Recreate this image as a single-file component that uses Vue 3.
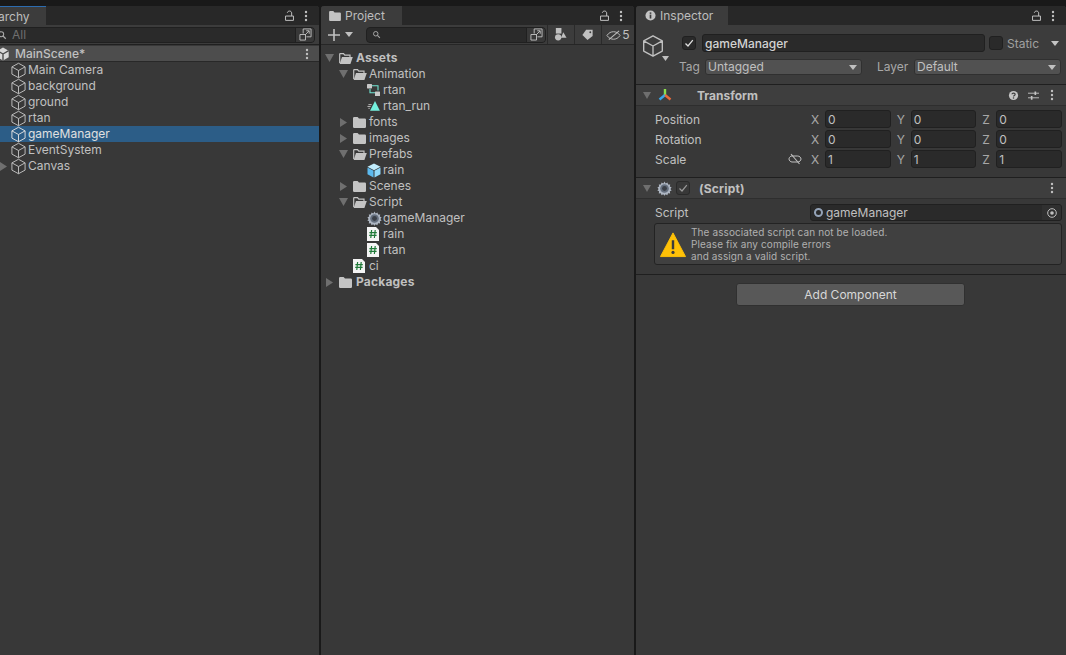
<script setup>
const hierarchy = [
  { name: "Main Camera" },
  { name: "background" },
  { name: "ground" },
  { name: "rtan" },
  { name: "gameManager", selected: true },
  { name: "EventSystem" },
  { name: "Canvas", arrow: "right" },
];

const project = [
  { name: "Assets", level: 0, arrow: "down", icon: "folder-open", bold: true },
  { name: "Animation", level: 1, arrow: "down", icon: "folder-open" },
  { name: "rtan", level: 2, icon: "controller" },
  { name: "rtan_run", level: 2, icon: "clip" },
  { name: "fonts", level: 1, arrow: "right", icon: "folder" },
  { name: "images", level: 1, arrow: "right", icon: "folder" },
  { name: "Prefabs", level: 1, arrow: "down", icon: "folder-open" },
  { name: "rain", level: 2, icon: "prefab" },
  { name: "Scenes", level: 1, arrow: "right", icon: "folder" },
  { name: "Script", level: 1, arrow: "down", icon: "folder-open" },
  { name: "gameManager", level: 2, icon: "gear" },
  { name: "rain", level: 2, icon: "script" },
  { name: "rtan", level: 2, icon: "script" },
  { name: "ci", level: 1, icon: "script" },
  { name: "Packages", level: 0, arrow: "right", icon: "folder", bold: true },
];

const transform = [
  { label: "Position", values: [0, 0, 0] },
  { label: "Rotation", values: [0, 0, 0] },
  { label: "Scale", values: [1, 1, 1], link: true },
];
const axes = ["X", "Y", "Z"];
</script>

<template>
  <svg class="defs" width="0" height="0">
    <symbol id="cube" viewBox="0 0 16 16">
      <path d="M8 1.200 14.200 4.600V11.400L8 14.800 1.800 11.400V4.600ZM1.800 4.600 8 8 14.200 4.600M8 8V14.800" fill="none" stroke="currentColor" stroke-width=".9" stroke-linejoin="round" />
    </symbol>
    <symbol id="lock" viewBox="0 0 10 12">
      <path d="M.6 6.600H9.400V11.400H.6ZM7.400 6.600V3.200C7.400.4 2.800.4 2.600 3" fill="none" stroke="currentColor" stroke-width="1.100" />
    </symbol>
    <symbol id="dots" viewBox="0 0 4 12">
      <circle cx="2" cy="2" r="1.200" fill="currentColor" />
      <circle cx="2" cy="6" r="1.200" fill="currentColor" />
      <circle cx="2" cy="10" r="1.200" fill="currentColor" />
    </symbol>
    <symbol id="expand" viewBox="0 0 14 14">
      <path d="M4.500 6V1H13V9.500H8M1 7H7V13H1ZM6.500 7.500 10.800 3.200M7.800 3H11V6.200" fill="none" stroke="currentColor" stroke-width="1" />
    </symbol>
    <symbol id="folder" viewBox="0 0 13 11">
      <path d="M0 1.200Q0 0 1.200 0H4.600L6 1.600H11.800Q13 1.600 13 2.800V9.800Q13 11 11.800 11H1.200Q0 11 0 9.800Z" fill="currentColor" />
    </symbol>
    <symbol id="folder-open" viewBox="0 0 14 11">
      <path d="M.7 10V1.200Q.7.600 1.300.600H4.500L5.800 2.200H11V4" fill="none" stroke="currentColor" stroke-width="1.200" />
      <path d="M3 4H13.800L11.400 11H.6Z" fill="currentColor" />
    </symbol>
    <symbol id="controller" viewBox="0 0 13 13">
      <path d="M3 5V8.800H9M4.600 1.800H11V6.600" fill="none" stroke="#6fe3d2" stroke-width="1.100" />
      <rect x="0" y="0" width="5" height="4.400" rx=".6" fill="#c9c9c9" />
      <rect x="8" y="7.400" width="5" height="4.600" rx=".6" fill="#c9c9c9" />
    </symbol>
    <symbol id="clip" viewBox="0 0 14 12">
      <path d="M8.600 .5 13.900 11H3.300Z" fill="#74f0de" />
      <path d="M1.500 4.500H5M.5 6.500H4M1.500 8.500H3" fill="none" stroke="#cfcfcf" stroke-width=".9" />
    </symbol>
    <symbol id="prefab" viewBox="0 0 14 15">
      <path d="M7 .5 13.500 3.800 7 7.200 .5 3.800Z" fill="#c0ecfc" />
      <path d="M.5 4.600 6.500 7.800V14.500L.5 11.200Z" fill="#5bb9ee" />
      <path d="M13.500 4.600 7.500 7.800V14.500L13.500 11.200Z" fill="#8fd8fa" />
    </symbol>
    <symbol id="gear" viewBox="0 0 16 16">
      <path d="M8 .6 9.200 2.600 11.200 1.600 11.800 3.800 14.100 3.600 13.700 5.800 15.600 6.800 14.300 8.500 15.600 10 13.700 11 14 13.200 11.800 13.100 11 15.200 9.200 14.200 8 15.800 6.600 14.200 4.800 15.200 4.100 13.100 1.900 13.200 2.200 11 .4 10 1.700 8.500 .4 6.800 2.300 5.800 1.900 3.600 4.200 3.800 4.800 1.600 6.800 2.600Z" fill="#aeb6c2" />
      <circle cx="8" cy="8" r="4.600" fill="#66707f" />
      <circle cx="8" cy="8" r="2.600" fill="#3a3f47" />
    </symbol>
    <symbol id="script" viewBox="0 0 12 14">
      <path d="M0 0H9L12 3V14H0Z" fill="#f4f4f4" />
      <path d="M4.600 3 3.800 11M8.200 3 7.400 11M2.400 5.600H9.800M2.200 8.400H9.600" fill="none" stroke="#1f7a38" stroke-width="1.200" />
    </symbol>
    <symbol id="tri-down" viewBox="0 0 8 7" preserveAspectRatio="none">
      <path d="M0 0H8L4 7Z" fill="currentColor" />
    </symbol>
    <symbol id="tri-right" viewBox="0 0 7 8" preserveAspectRatio="none">
      <path d="M0 0V8L7 4Z" fill="currentColor" />
    </symbol>
  </svg>

  <div class="editor">
    <!-- hierarchy -->
    <section class="panel hierarchy">
      <div class="tabbar">
        <div class="tab tab-hier active"><span class="nudge">archy</span></div>
        <button class="tab-btn"><svg class="i-lock"><use href="#lock" /></svg></button>
        <button class="tab-btn last"><svg class="i-dots"><use href="#dots" /></svg></button>
      </div>
      <div class="toolbar hier-tools">
        <div class="search">
          <svg class="i-search" viewBox="0 0 12 12"><circle cx="5" cy="5" r="3" fill="none" stroke="currentColor" stroke-width="1.300" /><path d="M7.200 7.200 10.500 10.500" stroke="currentColor" stroke-width="1.400" /></svg>
          <span class="placeholder">All</span>
          <span class="search-end"><svg class="i-expand"><use href="#expand" /></svg></span>
        </div>
      </div>
      <div class="scene-head">
        <svg class="i-unity" viewBox="0 0 16 16">
          <path d="M8 .5 14.500 4.200V11.800L8 15.500 1.500 11.800V4.200Z" fill="#d8d8d8" />
          <path d="M8 8V15.500M8 8 1.500 4.200M8 8 14.500 4.200" stroke="#4c4c4c" stroke-width="1.600" />
        </svg>
        <span>MainScene*</span>
        <svg class="i-dots scene-dots"><use href="#dots" /></svg>
      </div>
      <div v-for="row in hierarchy" :key="row.name" :class="['hier-row', { selected: row.selected }]">
        <span class="arrow-slot">
          <svg v-if="row.arrow" class="i-right"><use href="#tri-right" /></svg>
        </span>
        <svg class="i-cube"><use href="#cube" /></svg>
        <span>{{ row.name }}</span>
      </div>
    </section>

    <!-- project -->
    <section class="panel project">
      <div class="tabbar">
        <div class="tab tab-project active">
          <svg class="i-tab-folder"><use href="#folder" /></svg>
          <span class="nudge">Project</span>
        </div>
        <button class="tab-btn"><svg class="i-lock"><use href="#lock" /></svg></button>
        <button class="tab-btn last"><svg class="i-dots"><use href="#dots" /></svg></button>
      </div>
      <div class="toolbar project-tools">
        <div class="create">
          <svg class="i-plus" viewBox="0 0 12 12"><path d="M6 0V12M0 6H12" stroke="currentColor" stroke-width="1.600" /></svg>
          <svg class="i-small-down"><use href="#tri-down" /></svg>
        </div>
        <div class="search project-search">
          <svg class="i-search" viewBox="0 0 12 12"><circle cx="5" cy="5" r="3" fill="none" stroke="currentColor" stroke-width="1.300" /><path d="M7.200 7.200 10.500 10.500" stroke="currentColor" stroke-width="1.400" /></svg>
          <span class="search-end"><svg class="i-expand"><use href="#expand" /></svg></span>
        </div>
        <button class="tool-btn">
          <svg class="i-filter" viewBox="0 0 14 14">
            <rect x="2" y="0" width="6" height="6" fill="currentColor" />
            <circle cx="4.500" cy="10" r="3.400" fill="currentColor" />
            <path d="M10 4.500 13.500 10.500H7.500Z" fill="currentColor" />
          </svg>
        </button>
        <button class="tool-btn">
          <svg class="i-filter" viewBox="0 0 14 14">
            <path d="M5.500 2H12.500V8.500L7 13 1.500 7.500Z" fill="currentColor" />
            <circle cx="10" cy="4.600" r="1" fill="#3c3c3c" />
          </svg>
        </button>
        <button class="tool-btn wide">
          <svg class="i-eye" viewBox="0 0 16 12">
            <path d="M1 6.500C3 3.500 5.500 2.500 8 2.500S13 3.500 15 6.500C13 9.500 10.500 10.500 8 10.500S3 9.500 1 6.500Z" fill="none" stroke="currentColor" stroke-width="1" />
            <path d="M3 11 14 1.500" stroke="currentColor" stroke-width="1.100" />
          </svg>
          <span>5</span>
        </button>
      </div>
      <div class="tree">
        <div v-for="(row, i) in project" :key="i" class="tree-row" :style="{ paddingLeft: 3 + row.level * 14 + 'px' }">
          <span class="arrow-slot">
            <svg v-if="row.arrow === 'down'" class="i-down"><use href="#tri-down" /></svg>
            <svg v-else-if="row.arrow === 'right'" class="i-right"><use href="#tri-right" /></svg>
          </span>
          <span class="tree-icon">
            <svg :class="'icon-' + row.icon"><use :href="'#' + row.icon" /></svg>
          </span>
          <span :class="{ bold: row.bold }">{{ row.name }}</span>
        </div>
      </div>
    </section>

    <!-- inspector -->
    <section class="panel inspector">
      <div class="tabbar">
        <div class="tab tab-insp active">
          <svg class="i-info" viewBox="0 0 12 12">
            <circle cx="6" cy="6" r="5.500" fill="#c4c4c4" />
            <rect x="5.100" y="5" width="1.800" height="4.300" fill="#3c3c3c" />
            <rect x="5.100" y="2.600" width="1.800" height="1.600" fill="#3c3c3c" />
          </svg>
          <span class="nudge">Inspector</span>
        </div>
        <button class="tab-btn"><svg class="i-lock"><use href="#lock" /></svg></button>
        <button class="tab-btn last"><svg class="i-dots"><use href="#dots" /></svg></button>
      </div>

      <div class="go-head">
        <div class="go-icon">
          <svg class="i-go"><use href="#cube" /></svg>
          <svg class="i-go-arrow"><use href="#tri-down" /></svg>
        </div>
        <div class="go-fields">
          <div class="go-row">
            <span class="check on">
              <svg viewBox="0 0 10 10"><path d="M1.500 5.500 4 8 8.800 2.200" fill="none" stroke="currentColor" stroke-width="1.300" /></svg>
            </span>
            <div class="input name-input"><span class="nudge">gameManager</span></div>
            <div class="static">
              <span class="check"></span>
              <span class="static-label nudge">Static</span>
              <svg class="i-small-down"><use href="#tri-down" /></svg>
            </div>
          </div>
          <div class="go-row second">
            <span class="tag-label">Tag</span>
            <div class="dropdown tag-drop">Untagged<svg class="i-small-down"><use href="#tri-down" /></svg></div>
            <span class="layer-label">Layer</span>
            <div class="dropdown layer-drop">Default<svg class="i-small-down"><use href="#tri-down" /></svg></div>
          </div>
        </div>
      </div>

      <div class="comp-head">
        <svg class="i-down"><use href="#tri-down" /></svg>
        <svg class="i-transform" viewBox="0 0 14 14">
          <path d="M7 7V1" stroke="#8ce04e" stroke-width="2.400" />
          <path d="M7 7 1.500 11.500" stroke="#3aa6e8" stroke-width="2.400" />
          <path d="M7 7 12.500 11.500" stroke="#ea6a3a" stroke-width="2.400" />
        </svg>
        <span class="comp-title transform-title nudge">Transform</span>
        <svg class="i-help" viewBox="0 0 12 12">
          <circle cx="6" cy="6" r="5" fill="#c4c4c4" />
          <path d="M4.300 4.700C4.500 2.900 7.800 3 7.800 4.800 7.800 6 6 6 6 7.200" fill="none" stroke="#3e3e3e" stroke-width="1.300" />
          <rect x="5.300" y="8" width="1.400" height="1.400" fill="#3e3e3e" />
        </svg>
        <svg class="i-sliders" viewBox="0 0 12 12">
          <path d="M0 3.500H12M0 8.500H12" stroke="#c4c4c4" stroke-width="1" />
          <path d="M8 1.500V5.500M4 6.500V10.500" stroke="#c4c4c4" stroke-width="1.800" />
        </svg>
        <svg class="i-dots"><use href="#dots" /></svg>
      </div>

      <div class="transform-body">
        <div v-for="row in transform" :key="row.label" class="vec-row">
          <span class="vec-label nudge">{{ row.label }}</span>
          <svg v-if="row.link" class="i-link" viewBox="0 0 14 12">
            <path d="M3 3H9.500C11.500 3 13 4.500 13 6S11.500 9 9.500 9H4C2.500 9 1 7.500 1 6 1 4.800 1.800 3.800 3 3.200" fill="none" stroke="currentColor" stroke-width="1" />
            <path d="M3 1 11.500 11" stroke="currentColor" stroke-width="1.100" />
          </svg>
          <div class="vec-fields">
            <div v-for="(v, i) in row.values" :key="i" class="vec-cell">
              <span class="axis nudge">{{ axes[i] }}</span>
              <div class="input vec-input"><span class="nudge">{{ v }}</span></div>
            </div>
          </div>
        </div>
      </div>

      <div class="comp-head script-head">
        <svg class="i-down"><use href="#tri-down" /></svg>
        <svg class="i-comp-gear"><use href="#gear" /></svg>
        <span class="check dim">
          <svg viewBox="0 0 10 10"><path d="M1.500 5.500 4 8 8.800 2.200" fill="none" stroke="currentColor" stroke-width="1.200" /></svg>
        </span>
        <span class="comp-title script-title nudge">(Script)</span>
        <svg class="i-dots"><use href="#dots" /></svg>
      </div>

      <div class="script-body">
        <div class="script-row">
          <span class="vec-label nudge">Script</span>
          <div class="object-field">
            <span class="object-dot"></span>
            <span class="nudge">gameManager</span>
            <span class="object-pick">
              <svg class="i-pick" viewBox="0 0 10 10">
                <circle cx="5" cy="5" r="4.300" fill="none" stroke="currentColor" stroke-width="1" />
                <circle cx="5" cy="5" r="1.800" fill="currentColor" />
              </svg>
            </span>
          </div>
        </div>
        <div class="help">
          <svg class="i-warn" viewBox="0 0 28 28">
            <path d="M14 1.500 27.500 27H.5Z" fill="#ffc107" stroke="#ffc107" stroke-linejoin="round" />
            <path d="M14 9.500V19" stroke="#3c3c3c" stroke-width="2.600" />
            <circle cx="14" cy="22.500" r="1.700" fill="#3c3c3c" />
          </svg>
          <p>The associated script can not be loaded.<br />Please fix any compile errors<br />and assign a valid script.</p>
        </div>
      </div>

      <div class="add-wrap">
        <button class="add-btn">Add Component</button>
      </div>
    </section>
  </div>
</template>

<style>
html,
body {
  margin: 0;
  background: #191919;
  overflow: hidden;
}
</style>

<style scoped>
.defs {
  position: absolute;
}

.editor {
  width: 1066px;
  height: 655px;
  padding-top: 6px;
  box-sizing: border-box;
  display: flex;
  gap: 2px;
  overflow: hidden;
  background: #191919;
  color: #c0c0c0;
  font-family: Inter, "Noto Sans", sans-serif;
  font-size: 12px;
  line-height: 16px;
}

svg {
  display: block;
  flex: none;
}

button {
  font: inherit;
  color: inherit;
  border: 0;
  padding: 0;
  background: none;
}

/* most labels sit one pixel under the box centre in the editor */
.nudge {
  padding-top: 1px;
}

.panel {
  background: #383838;
  border-radius: 3px 3px 0 0;
  overflow: hidden;
}

.hierarchy {
  width: 359px;
  margin-left: -40px;
  flex: none;
}

.project {
  width: 313px;
  flex: none;
}

.inspector {
  flex: 1;
}

/* tabs */
.tabbar {
  height: 19px;
  display: flex;
  align-items: center;
  justify-content: flex-end;
  background: #282828;
}

.tab {
  height: 19px;
  margin-right: auto;
  box-sizing: border-box;
  display: flex;
  align-items: center;
  background: #3c3c3c;
  color: #bdbdbd;
}

.tab-hier {
  width: 86px;
  padding-left: 38px;
  border-top: 1px solid #2c6cb0;
}

.tab-project {
  width: 81px;
  padding-left: 8px;
  gap: 4px;
}

.tab-insp {
  width: 92px;
  padding-left: 9px;
  gap: 4px;
}

.tab-btn {
  width: 18px;
  height: 19px;
  display: flex;
  align-items: center;
  justify-content: center;
}

.tab-btn.last {
  width: 16px;
  margin-right: 5px;
}

.i-lock {
  width: 9px;
  height: 11px;
}

.i-dots {
  width: 4px;
  height: 12px;
}

.i-tab-folder {
  width: 12px;
  height: 10px;
  color: #c4c4c4;
}

.i-info {
  width: 11px;
  height: 11px;
}

/* toolbars */
.toolbar {
  height: 20px;
  box-sizing: border-box;
  display: flex;
  align-items: center;
  background: #3c3c3c;
}

.search {
  height: 16px;
  box-sizing: border-box;
  display: flex;
  align-items: center;
  background: #2a2a2a;
  border: 1px solid #202020;
  border-radius: 4px;
  overflow: hidden;
}

.hier-tools {
  padding-left: 36px;
  border-bottom: 1px solid #202020;
}

.hier-tools .search {
  width: 319px;
}

.i-search {
  width: 10px;
  height: 10px;
  margin-left: 0;
  color: #a8a8a8;
}

.placeholder {
  margin-left: 5px;
  color: #6f6f6f;
}

.search-end {
  margin-left: auto;
  width: 18px;
  height: 16px;
  display: flex;
  align-items: center;
  justify-content: center;
  background: #383838;
  border-left: 1px solid #202020;
}

.i-expand {
  width: 13px;
  height: 13px;
}

/* hierarchy rows */
.scene-head {
  height: 15px;
  padding: 0 10px 0 36px;
  margin-top: 1px;
  display: flex;
  align-items: center;
  gap: 5px;
  background: #4d4d4d;
  border-bottom: 1px solid #282828;
  font-weight: 500;
}

.i-unity {
  width: 14px;
  height: 14px;
}

.scene-dots {
  margin-left: auto;
}

.hier-row {
  height: 16px;
  padding-left: 38px;
  display: flex;
  align-items: center;
}

.hier-row .arrow-slot {
  width: 13px;
}

.hier-row.selected {
  background: #2c5d87;
  color: #e0e0e0;
}

.i-cube {
  width: 17px;
  height: 17px;
  margin: 0 1px 0 -1px;
}

.arrow-slot {
  width: 15px;
  flex: none;
  color: #6f6f6f;
}

.i-right {
  width: 7px;
  height: 9px;
  margin-left: 2px;
}

.i-down {
  width: 9px;
  height: 8px;
  margin-left: 1px;
  color: #6f6f6f;
}

/* project */
.project-tools {
  background: #3c3c3c;
  border-bottom: 1px solid #262626;
}

.create {
  width: 45px;
  padding-left: 7px;
  box-sizing: border-box;
  display: flex;
  align-items: center;
  gap: 5px;
}

.i-plus {
  width: 12px;
  height: 12px;
}

.i-small-down {
  width: 8px;
  height: 5px;
}

.project-search {
  width: 180px;
}

.project-search .i-search {
  margin-left: 5px;
  width: 9px;
  height: 9px;
}

.tool-btn {
  width: 26px;
  height: 19px;
  margin-left: 1px;
  display: flex;
  align-items: center;
  justify-content: center;
  background: #3c3c3c;
  border-left: 1px solid #2a2a2a;
}

.tool-btn.wide {
  width: 33px;
  gap: 1px;
}

.i-filter {
  width: 13px;
  height: 13px;
}

.i-eye {
  width: 15px;
  height: 12px;
}

.tree {
  padding-top: 5px;
}

.tree-row {
  height: 16px;
  display: flex;
  align-items: center;
}

.tree-icon {
  width: 16px;
  flex: none;
  display: flex;
  align-items: center;
}

.bold {
  margin-left: 1px;
  font-weight: 700;
  letter-spacing: 0.2px;
}

.icon-folder {
  width: 13px;
  height: 11px;
  color: #c4c4c4;
}

.icon-folder-open {
  width: 14px;
  height: 11px;
  color: #c4c4c4;
}

.icon-controller {
  width: 13px;
  height: 13px;
}

.icon-clip {
  width: 13px;
  height: 12px;
}

.icon-prefab {
  width: 14px;
  height: 15px;
}

.icon-gear {
  width: 15px;
  height: 15px;
}

.icon-script {
  width: 12px;
  height: 14px;
}

/* inspector */
.go-head {
  height: 60px;
  box-sizing: border-box;
  display: flex;
  background: #3c3c3c;
  border-bottom: 1px solid #1f1f1f;
}

.go-icon {
  width: 43px;
  flex: none;
  position: relative;
}

.i-go {
  width: 24px;
  height: 24px;
  margin: 9px 0 0 5px;
}

.i-go-arrow {
  position: absolute;
  left: 26px;
  top: 31px;
  width: 7px;
  height: 5px;
}

.go-fields {
  flex: 1;
  padding-top: 9px;
}

.go-row {
  height: 18px;
  padding: 0 4px 0 3px;
  display: flex;
  align-items: center;
}

.go-row.second {
  height: 16px;
  margin-top: 7px;
  padding: 0;
}

.check {
  width: 14px;
  height: 14px;
  box-sizing: border-box;
  flex: none;
  display: flex;
  align-items: center;
  justify-content: center;
  background: #2a2a2a;
  border: 1px solid #202020;
  border-radius: 3px;
  color: #e0e0e0;
}

.check svg {
  width: 10px;
  height: 10px;
}

.input {
  background: #2a2a2a;
  border: 1px solid #202020;
  border-radius: 3px;
  box-sizing: border-box;
  display: flex;
  align-items: center;
}

.name-input {
  flex: 1;
  height: 18px;
  margin-left: 6px;
  padding-left: 2px;
  color: #d2d2d2;
  font-weight: 500;
}

.static {
  width: 73px;
  margin-left: 4px;
  display: flex;
  align-items: center;
  color: #a0a0a0;
}

.static-label {
  margin-left: 4px;
}

.static .i-small-down {
  margin-left: auto;
  margin-right: 3px;
  color: #c4c4c4;
}

.tag-label {
  width: 26px;
  color: #a8a8a8;
}

.layer-label {
  width: 37px;
  margin-left: 15px;
  color: #a8a8a8;
}

.dropdown {
  height: 16px;
  box-sizing: border-box;
  padding: 0 4px 0 2px;
  display: flex;
  align-items: center;
  justify-content: space-between;
  background: #515151;
  border: 1px solid #303030;
  border-radius: 3px;
  line-height: 14px;
}

.tag-drop {
  width: 157px;
}

.layer-drop {
  width: 147px;
}

.comp-head {
  height: 21px;
  box-sizing: border-box;
  padding: 0 12px 0 6px;
  display: flex;
  align-items: center;
  background: #3e3e3e;
  border-bottom: 1px solid #2e2e2e;
}

.comp-head .i-down {
  width: 8px;
  height: 7px;
}

.i-transform {
  width: 14px;
  height: 14px;
  margin-left: 7px;
}

.comp-title {
  margin-right: auto;
  font-weight: 700;
}

.transform-title {
  margin-left: 25px;
}

.i-help {
  width: 11px;
  height: 11px;
}

.i-sliders {
  width: 11px;
  height: 11px;
  margin: 0 11px 0 9px;
}

.transform-body {
  padding: 4px 4px 9px 19px;
  border-bottom: 1px solid #1f1f1f;
}

.vec-row {
  height: 18px;
  margin-bottom: 2px;
  display: flex;
  align-items: center;
}

.vec-row:last-child {
  margin-bottom: 0;
}

.vec-label {
  flex: 1;
}

.i-link {
  width: 14px;
  height: 12px;
  margin-right: 8px;
}

.vec-fields {
  width: 252px;
  flex: none;
  display: flex;
  gap: 5px;
}

.vec-cell {
  flex: 1;
  display: flex;
  align-items: center;
}

.axis {
  width: 15px;
  flex: none;
  padding-left: 1px;
  box-sizing: border-box;
  color: #a8a8a8;
}

.vec-input {
  flex: 1;
  height: 18px;
  padding-left: 2px;
}

.script-head .i-comp-gear {
  width: 15px;
  height: 15px;
  margin-left: 6px;
}

.check.dim {
  margin-left: 4px;
  background: #383838;
  border-color: #2a2a2a;
  color: #9a9a9a;
}

.script-title {
  margin-left: 9px;
  letter-spacing: 0.2px;
}

.script-body {
  padding: 5px 4px 9px 18px;
  border-bottom: 1px solid #1f1f1f;
}

.script-row {
  height: 17px;
  padding-left: 1px;
  display: flex;
  align-items: center;
}

.object-field {
  width: 252px;
  height: 17px;
  box-sizing: border-box;
  display: flex;
  align-items: center;
  background: #2a2a2a;
  border: 1px solid #202020;
  border-radius: 3px;
  overflow: hidden;
}

.object-dot {
  width: 9px;
  height: 9px;
  margin: 0 3px 0 3px;
  box-sizing: border-box;
  border: 2px solid #94a3b8;
  border-radius: 50%;
}

.object-pick {
  width: 19px;
  height: 100%;
  margin-left: auto;
  display: flex;
  align-items: center;
  justify-content: center;
  background: #303030;
}

.i-pick {
  width: 10px;
  height: 10px;
}

.help {
  height: 42px;
  margin-top: 2px;
  box-sizing: border-box;
  display: flex;
  align-items: center;
  background: #404040;
  border: 1px solid #232323;
  border-radius: 3px;
}

.i-warn {
  width: 26px;
  height: 27px;
  margin: 0 5px 0 5px;
}

.help p {
  margin: 0;
  font-size: 10px;
  line-height: 12px;
  color: #b0b0b0;
  letter-spacing: 0.1px;
}

.add-wrap {
  padding-top: 8px;
  padding-left: 100px;
}

.add-btn {
  width: 229px;
  height: 23px;
  box-sizing: border-box;
  display: block;
  background: #585858;
  border: 1px solid #303030;
  border-radius: 3px;
  color: #d8d8d8;
}
</style>
